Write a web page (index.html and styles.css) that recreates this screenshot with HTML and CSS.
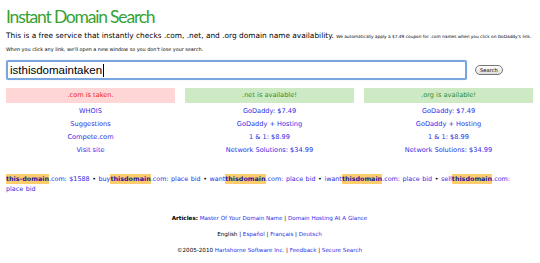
FILE: index.html
```html
<!DOCTYPE html>
<html>
<head>
<meta charset="utf-8">
<link rel="stylesheet" href="styles.css">
</head>
<body>
<div class="page">
  <h1 class="title">Instant Domain Search</h1>
  <p class="intro">This is a free service that instantly checks .com, .net, and .org domain name availability. <span class="smaller">We automatically apply a $7.49 coupon for .com names when you click on GoDaddy's link.</span></p>
  <p class="small note">When you click any link, we'll open a new window so you don't lose your search.</p>
  <div class="searchrow">
    <div class="input">isthisdomaintaken<span class="caret"></span></div>
    <button class="btn">Search</button>
  </div>
  <div class="results">
    <div class="col">
      <div class="status taken">.com is taken.</div>
      <a href="#">WHOIS</a>
      <a href="#">Suggestions</a>
      <a href="#">Compete.com</a>
      <a href="#">Visit site</a>
    </div>
    <div class="col">
      <div class="status avail">.net is available!</div>
      <a href="#">GoDaddy: $7.49</a>
      <a href="#">GoDaddy + Hosting</a>
      <a href="#">1 &amp; 1: $8.99</a>
      <a href="#">Network Solutions: $34.99</a>
    </div>
    <div class="col">
      <div class="status avail">.org is available!</div>
      <a href="#">GoDaddy: $7.49</a>
      <a href="#">GoDaddy + Hosting</a>
      <a href="#">1 &amp; 1: $8.99</a>
      <a href="#">Network Solutions: $34.99</a>
    </div>
  </div>
  <p class="aff"><a href="#"><b class="hl">this-domain</b>.com: $1588</a> <span class="dot">&bull;</span> <a href="#">buy<b class="hl">thisdomain</b>.com: place bid</a> <span class="dot">&bull;</span> <a href="#">want<b class="hl">thisdomain</b>.com: place bid</a> <span class="dot">&bull;</span> <a href="#">iwant<b class="hl">thisdomain</b>.com: place bid</a> <span class="dot">&bull;</span> <a href="#">sell<b class="hl">thisdomain</b>.com: place bid</a></p>
  <div class="footer">
    <p><b>Articles:</b> <a href="#">Master Of Your Domain Name</a> | <a href="#">Domain Hosting At A Glance</a></p>
    <p>English | <a href="#">Español</a> | <a href="#">Français</a> | <a href="#">Deutsch</a></p>
    <p>©2005-2010 <a href="#">Hartshorne Software Inc.</a> | <a href="#">Feedback</a> | <a href="#">Secure Search</a></p>
  </div>
</div>
</body>
</html>
```
FILE: styles.css
```css
html, body { margin: 0; padding: 0; background: #fff; }
body { font-family: "DejaVu Sans", sans-serif; color: #000; }
.page { padding: 0 7px 0 6px; }
.title {
  font-family: Lato, "Open Sans", sans-serif;
  font-weight: 400;
  font-size: 17.5px;
  color: #35a233;
  margin: 0;
  padding-top: 4px;
  line-height: 26px;
  letter-spacing: -1.2px;
}
.intro { font-size: 7.4px; margin: 1px 0 0; line-height: 10px; white-space: nowrap; }
.smaller { font-size: 4.3px; }
.small { font-size: 4.9px; }
.note { margin: 3px 0 0; line-height: 8px; }
.searchrow { display: flex; align-items: center; margin-top: 7px; }
.input {
  box-sizing: border-box;
  width: 461px; height: 20px;
  border: 2px solid #7aa6e0;
  border-radius: 2px;
  font-family: "Liberation Sans", sans-serif;
  font-size: 11.5px; line-height: 16px;
  padding-left: 2px;
  display: flex; align-items: center;
  box-shadow: 0 0 1px #9bbce8;
}
.caret { display: inline-block; width: 1px; height: 13px; background: #000; margin-left: 1px; }
.btn {
  margin-left: 8px;
  font-family: "DejaVu Sans", sans-serif;
  font-size: 5.2px; padding: 1px 4px; height: 10px; line-height: 6px;
  border: 1px solid #777; border-radius: 5px; background: linear-gradient(#fff, #ddd);
}
.results { display: flex; gap: 10px; margin-top: 8px; }
.col { flex: 1; display: flex; flex-direction: column; align-items: center; }
.status { align-self: stretch; text-align: center; height: 15px; line-height: 15px; font-size: 6.6px; }
.taken { background: #ffd6d6; color: #ee2222; }
.avail { background: #cdeac4; color: #2a8a2a; }
a { color: #2e2ee6; text-decoration: none; }
.col a { font-size: 6.6px; line-height: 13px; }
.col .status + a { margin-top: 2px; }
.aff { font-size: 6.4px; line-height: 10px; margin: 17px 4px 0 0; word-spacing: 0.5px; }
.hl { background: #fdcc6c; font-weight: bold; color: #1a1a99; padding: 1px 0; }
.dot { color: #000; }
.footer { text-align: center; font-size: 5.6px; margin-top: 20px; }
.footer p { margin: 0 0 7px; line-height: 9px; }
```
